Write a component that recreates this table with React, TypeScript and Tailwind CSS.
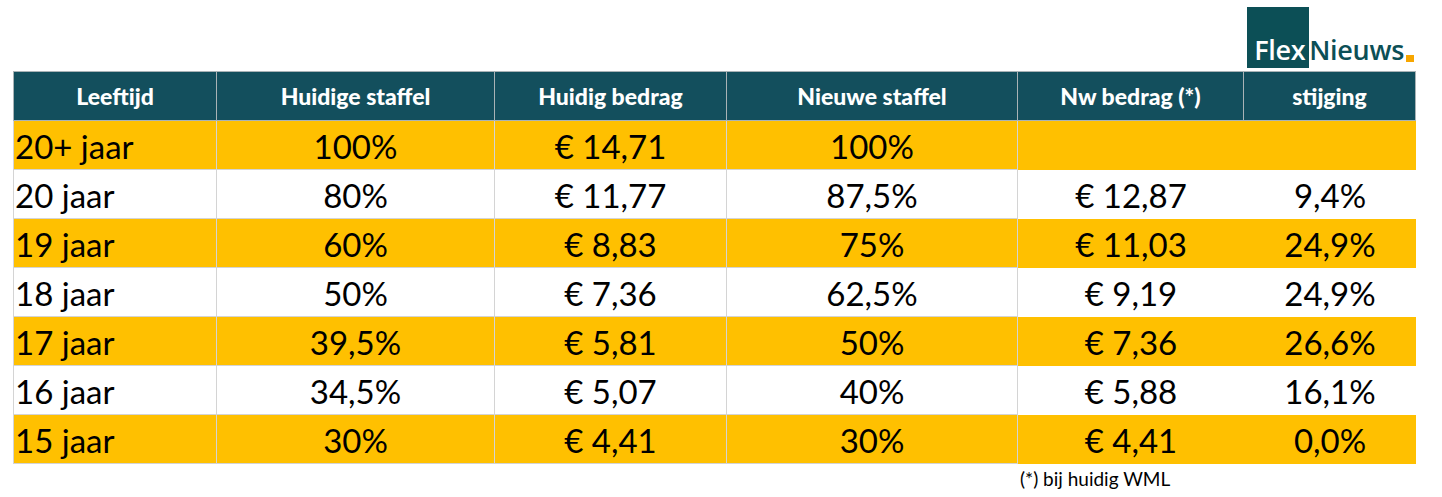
const cols = ["Leeftijd", "Huidige staffel", "Huidig bedrag", "Nieuwe staffel", "Nw bedrag (*)", "stijging"];

const rows = [
  ["20+ jaar", "100%", "€ 14,71", "100%", "", ""],
  ["20 jaar", "80%", "€ 11,77", "87,5%", "€ 12,87", "9,4%"],
  ["19 jaar", "60%", "€ 8,83", "75%", "€ 11,03", "24,9%"],
  ["18 jaar", "50%", "€ 7,36", "62,5%", "€ 9,19", "24,9%"],
  ["17 jaar", "39,5%", "€ 5,81", "50%", "€ 7,36", "26,6%"],
  ["16 jaar", "34,5%", "€ 5,07", "40%", "€ 5,88", "16,1%"],
  ["15 jaar", "30%", "€ 4,41", "30%", "€ 4,41", "0,0%"],
];

const App = () => {
  return (
    <div className="w-[1442px] h-[497px] bg-white flex flex-col font-['Lato',sans-serif] text-black">
      {/* Logo */}
      <div className="h-[71px] flex justify-end items-start pr-[28px]">
        <div className="flex items-end mt-[7px] font-['Open_Sans',sans-serif] font-semibold text-[27px] leading-none tracking-[-0.3px]">
          <div className="w-[62px] h-[61px] bg-[#0c4f56] flex items-end pl-[7px] pb-[5px] text-white">
            Flex
          </div>
          <div className="pb-[5px] text-[#0c4f56]">Nieuws</div>
          <div className="w-[8px] h-[7px] bg-[#f7a600] mb-[6px] ml-[2px]" />
        </div>
      </div>

      {/* Table */}
      <div className="ml-[13px] grid grid-cols-[204px_278px_232px_291px_226px_172px] w-[1403px]">
        {cols.map((c, i) => (
          <div
            key={c}
            className={`h-[50px] bg-[#134f5d] border-t border-b border-r border-[#a9b3b6] ${i === 0 ? "border-l" : ""} flex items-center justify-center text-white font-black text-[23px]`}
          >
            {c}
          </div>
        ))}
        {rows.map((r, ri) =>
          r.map((v, ci) => (
            <div
              key={`${ri}-${ci}`}
              className={`h-[49px] flex items-center pt-[3px] text-[33px] ${ri % 2 === 0 ? "bg-[#ffc000]" : "bg-white"} ${ci < 4 ? "border-r border-b border-[#d4d4d4]" : ""} ${ci === 0 ? "border-l justify-start pl-[1px]" : "justify-center"}`}
            >
              {v}
            </div>
          ))
        )}
      </div>

      <div className="pl-[1020px] mt-[5px] text-[19px] leading-none">(*) bij huidig WML</div>
    </div>
  );
};

export default App;
